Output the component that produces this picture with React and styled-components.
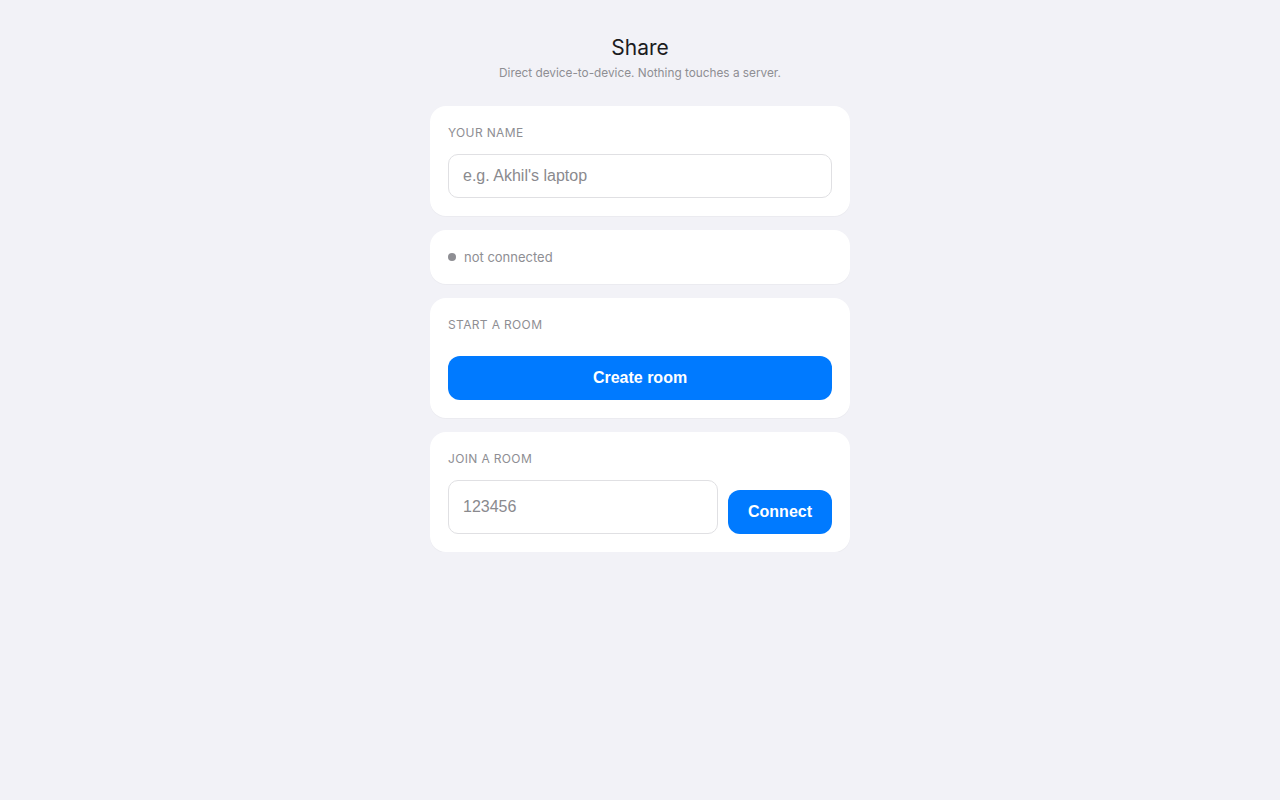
import React from "react";
import styled, { createGlobalStyle } from "styled-components";

const Global = createGlobalStyle`
  html, body { margin: 0; padding: 0; background: #f2f2f7; }
  body { font-family: Inter, "Noto Sans", sans-serif; color: #1c1c1e; }
  * { box-sizing: border-box; }
`;

const Page = styled.main`
  width: 420px;
  margin: 0 auto;
  padding-top: 34px;
  display: flex;
  flex-direction: column;
`;

const Header = styled.header`
  text-align: center;
  margin-bottom: 24px;
`;

const Title = styled.h1`
  margin: 0;
  font-size: 21px;
  line-height: 28px;
  font-weight: 400;
  color: #1c1c1e;
`;

const Subtitle = styled.p`
  margin: 2px 0 0;
  font-size: 11.8px;
  line-height: 18px;
  color: #8e8e93;
`;

const Stack = styled.div`
  display: flex;
  flex-direction: column;
  gap: 14px;
`;

const Card = styled.section`
  display: flex;
  flex-direction: column;
  background: #fff;
  border-radius: 16px;
  padding: 18px;
  box-shadow: 0 1px 1px rgba(0, 0, 0, 0.03);
`;

const Label = styled.div`
  font-size: 12px;
  line-height: 17px;
  letter-spacing: 0.35px;
  text-transform: uppercase;
  color: #8e8e93;
  margin-bottom: 13px;
`;

const Input = styled.input`
  display: block;
  width: ${(p) => (p.$grow ? "auto" : "100%")};
  flex: ${(p) => (p.$grow ? "1" : "none")};
  min-width: 0;
  height: ${(p) => p.$h || 44}px;
  border: 1px solid #e0e0e3;
  border-radius: 10px;
  padding: 0 14px;
  font-family: "Liberation Sans", Arial, sans-serif;
  font-size: 16px;
  color: #1c1c1e;
  background: #fff;
  outline: none;
  &::placeholder { color: #8a8a8e; }
`;

const Button = styled.button`
  display: block;
  width: ${(p) => (p.$full ? "100%" : "auto")};
  height: 44px;
  margin-top: 10px;
  padding: 0 20px;
  border: none;
  border-radius: 12px;
  background: #007aff;
  color: #fff;
  font-family: "Liberation Sans", Arial, sans-serif;
  font-size: 16px;
  font-weight: 700;
  cursor: pointer;
`;

const Row = styled.div`
  display: flex;
  gap: 10px;
  align-items: flex-start;
`;

const Status = styled.div`
  display: flex;
  align-items: center;
  gap: 8px;
  font-size: 13px;
  line-height: 18px;
  color: #8e8e93;
`;

const Dot = styled.span`
  width: 8px;
  height: 8px;
  border-radius: 50%;
  background: #8e8e93;
  flex: none;
`;

export default function App() {
  return (
    <>
      <Global />
      <Page>
        <Header>
          <Title>Share</Title>
          <Subtitle>Direct device-to-device. Nothing touches a server.</Subtitle>
        </Header>
        <Stack>
          <Card>
            <Label>Your name</Label>
            <Input placeholder="e.g. Akhil's laptop" />
          </Card>
          <Card>
            <Status>
              <Dot />
              not connected
            </Status>
          </Card>
          <Card>
            <Label>Start a room</Label>
            <Button $full>Create room</Button>
          </Card>
          <Card>
            <Label>Join a room</Label>
            <Row>
              <Input $grow $h={54} placeholder="123456" />
              <Button>Connect</Button>
            </Row>
          </Card>
        </Stack>
      </Page>
    </>
  );
}
